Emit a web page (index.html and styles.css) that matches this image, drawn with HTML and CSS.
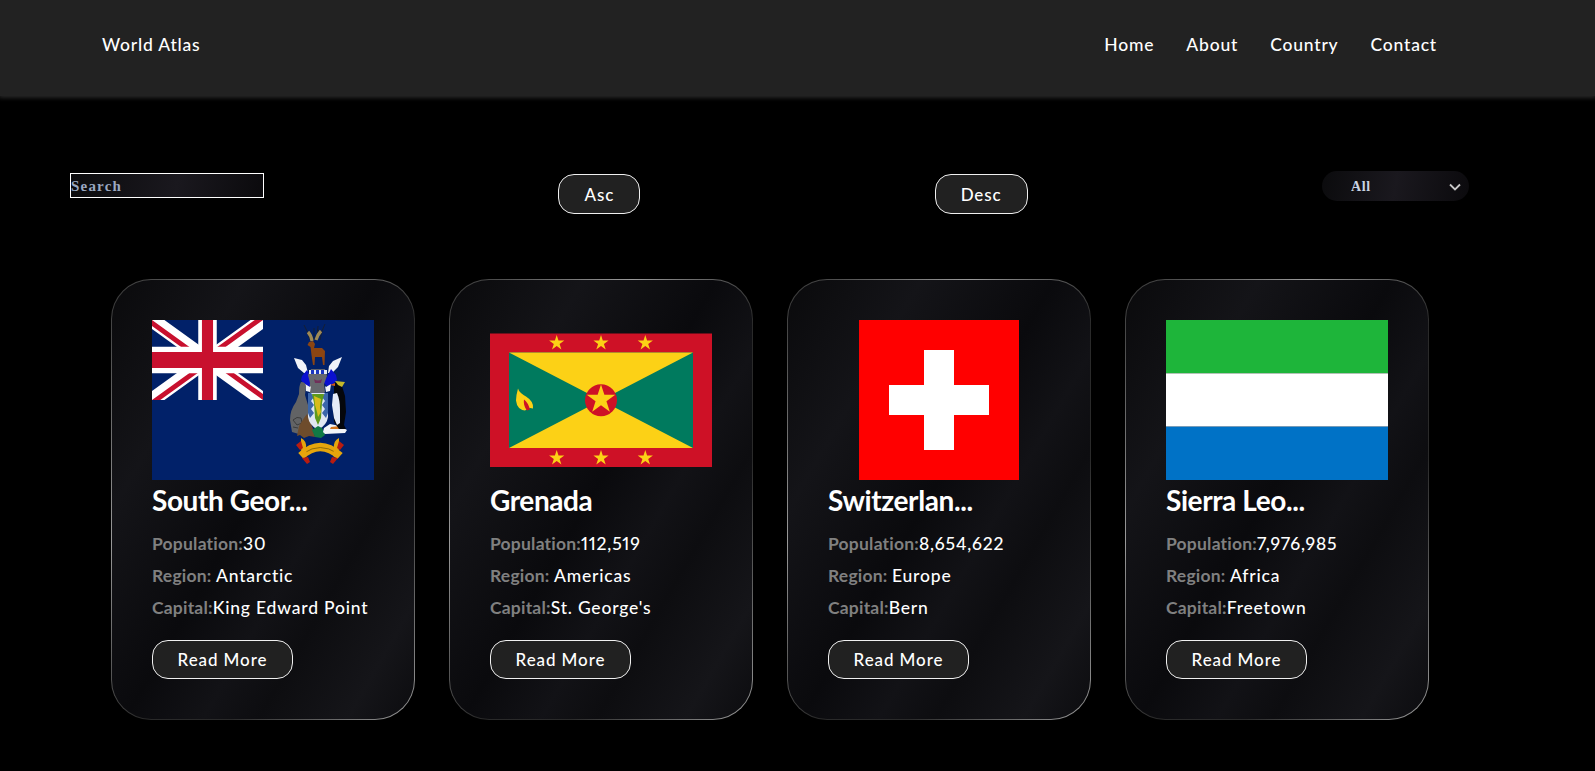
FILE: index.html
```html
<!DOCTYPE html>
<html lang="en">
<head>
<meta charset="utf-8">
<title>World Atlas</title>
<link rel="stylesheet" href="styles.css">
</head>
<body>
<header class="topbar">
  <a class="logo" href="#">World Atlas</a>
  <nav class="nav">
    <a href="#">Home</a>
    <a href="#">About</a>
    <a href="#">Country</a>
    <a href="#">Contact</a>
  </nav>
</header>
<main>
  <section class="toolbar">
    <input class="search" type="text" placeholder="Search">
    <button class="pill">Asc</button>
    <button class="pill">Desc</button>
    <div class="select-wrap">
      <select class="select"><option>All</option></select>
      <svg class="chevron" viewBox="0 0 12 8"><path d="M1 1.5 6 6.5 11 1.5" fill="none" stroke="#c8c8c8" stroke-width="1.8"/></svg>
    </div>
  </section>
  <section class="cards">
    <article class="card">
      <svg class="flag" viewBox="0 0 222 160">
        <rect width="222" height="160" fill="#012169"/>
        <svg x="0" y="0" width="111" height="80" viewBox="0 0 60 30" preserveAspectRatio="none">
          <clipPath id="uj"><path d="M30 15h30v15zv15H0zH0V0zV0h30z"/></clipPath>
          <path d="M0 0 60 30M60 0 0 30" stroke="#fff" stroke-width="6"/>
          <path d="M0 0 60 30M60 0 0 30" stroke="#C8102E" stroke-width="4" clip-path="url(#uj)"/>
          <path d="M30 0V30M0 15H60" stroke="#fff" stroke-width="10"/>
          <path d="M30 0V30M0 15H60" stroke="#C8102E" stroke-width="6"/>
        </svg>
        <!-- coat of arms: antlers and stag -->
        <path d="M158 20 155 11 152 5M158 14 155 13M168 20 170 11 173 4M170 12 165 10M162 20V8M165 20 166 6" stroke="#1c1c1c" stroke-width=".7" fill="none"/>
        <path d="M156 12q3 3 4 9M169 11q-3 3-5 9" stroke="#a08a55" stroke-width="3.200" fill="none"/>
        <path d="M157 22l4-1 2 3-1 4 8 0 3 3-.5 14h-1.500l-1-8h-7l-.5 8h-1.500l-1.500-10-1-8-3-2z" fill="#8c4512"/>
        <!-- wings and mantling -->
        <path d="M142 38l8 2 4 5 2 8-4 0-6-5zM190 37l-9 4-4 5-1 7 4 0 6-6z" fill="#f2f4f8"/>
        <path d="M150 56l5-6 4 7 3 5-4 5-6-2-3-5zM184 55l-5-6-4 8-4 5 5 5 5-3 4-4z" fill="#0a10d0"/>
        <!-- helmet -->
        <path d="M159 49h14l2 7-3 8 1 8-3 3h-11l-2-4 1-8-2-8z" fill="#66686e"/>
        <path d="M157 50h18v4h-18z" fill="#e8edf5"/>
        <path d="M159 50h3v4h-3zM164 50h3v4h-3zM169 50h3v4h-3z" fill="#1a35c0"/>
        <path d="M162 59q4 3 8 0l-1 4h-6z" fill="#70305a"/>
        <path d="M153 64l5 3 1-1-1 6-4-1zM179 64l-5 3-1-1 1 6 4-1z" fill="#f2f4f8"/>
        <!-- seal -->
        <path d="M149 62q5 0 5 5l-1 8 3 10 1 12-7 18-10-3-2-12q0-10 6-18l3-8q0-9 2-12z" fill="#626365"/>
        <path d="M141 100q4-4 8-2l1 5-5 2zM146 108l-5-1" stroke="#3c3c3c" stroke-width="1" fill="none"/>
        <path d="M145 116l2-10 5-8 3-4 3 6 3 9 2 8-6-1-5 2-4-3z" fill="#6e4c2c"/>
        <!-- shield -->
        <path d="M156 73h20v24q-1 8-10 13-9-5-10-13z" fill="#e0e7f2"/>
        <path d="M156 73h3l3 4-3 4 3 4-3 4 3 4-4 5-2-5zM176 73h-3l-3 4 3 4-3 4 3 4-3 4 4 5 2-5z" fill="#3b66aa"/>
        <path d="M160 74h12l-2 9-1 15-3 7-3-7-1-15z" fill="#5f9a1c"/>
        <path d="M162 76l7 3-1 8 1 5-3 5-1-5-2-7z" fill="#d8bc1c"/>
        <path d="M160 110l6-4 4 2 3 7-4 3-6-1z" fill="#117a45"/>
        <!-- penguin on ice -->
        <path d="M172 108l6-4 10 2 7 4-2 3-20 1-2-2z" fill="#f2f4f8"/>
        <path d="M178 109h11l3-1-4-2-9 1z" fill="#d4761e"/>
        <path d="M182 63q6-2 8 3l3 10 1 16-2 13 2 4-7 0-5-7-1-20 1-10z" fill="#05070c"/>
        <path d="M181 74l4-1q3 7 3 17l0 13-3 2-3-7-2-13z" fill="#e6ecf8"/>
        <path d="M178 65l5-2 0 3z" fill="#d45a14"/>
        <path d="M183 61l10 1-3 5-4-2z" fill="#c4b82a"/>
        <!-- motto scroll -->
        <path d="M149 136Q168 118 188 136" stroke="#e6a50c" stroke-width="8" fill="none"/>
        <path d="M152 133Q168 122 185 133" stroke="#7a5c08" stroke-width=".8" fill="none"/>
        <path d="M149 118q6 3 5 10l1 8-4 2q-2-6-2-11zM187 118q-6 3-5 10l-1 8 4 2q2-6 2-11z" fill="#e6a50c"/>
        <path d="M144 125l5-4 2 7-3 2zM192 125l-5-4-2 7 3 2zM150 138l6-1 2 5-3 2zM186 138l-6-1-2 5 3 2z" fill="#b81c10"/>
      </svg>
      <h2 class="title">South Geor...</h2>
      <p class="stat"><span class="label">Population:</span>30</p>
      <p class="stat"><span class="label">Region: </span>Antarctic</p>
      <p class="stat"><span class="label">Capital:</span>King Edward Point</p>
      <button class="pill read">Read More</button>
    </article>
    <article class="card">
      <svg class="flag" viewBox="0 0 222 133">
        <defs><path id="star" d="M0-1 .225-.309.951-.309.363.118.588.809 0 .382-.588.809-.363.118-.951-.309-.225-.309z"/></defs>
        <rect width="222" height="133.500" fill="#CE1126"/>
        <rect x="19" y="19" width="184" height="95.500" fill="#007A5E"/>
        <path d="M19 19H203L111 66.700 203 114.500H19L111 66.700z" fill="#FCD116"/>
        <circle cx="111" cy="66.700" r="16" fill="#CE1126"/>
        <g fill="#FCD116">
          <use href="#star" transform="translate(111 66) scale(15)"/>
          <use href="#star" transform="translate(66.700 9.500) scale(8)"/>
          <use href="#star" transform="translate(111 9.500) scale(8)"/>
          <use href="#star" transform="translate(155.300 9.500) scale(8)"/>
          <use href="#star" transform="translate(66.700 124.500) scale(8)"/>
          <use href="#star" transform="translate(111 124.500) scale(8)"/>
          <use href="#star" transform="translate(155.300 124.500) scale(8)"/>
          <path d="M28 55q1 4 8 8 8 5 7 12-3-1-5 0l-3 2q-8-1-9-10 0-5 2-12z"/>
        </g>
        <path d="M34 66q4 3 6 10l-3 1q-4-5-3-11z" fill="#CE1126"/>
      </svg>
      <h2 class="title">Grenada</h2>
      <p class="stat"><span class="label">Population:</span>112,519</p>
      <p class="stat"><span class="label">Region: </span>Americas</p>
      <p class="stat"><span class="label">Capital:</span>St. George's</p>
      <button class="pill read">Read More</button>
    </article>
    <article class="card">
      <svg class="flag" viewBox="0 0 160 160">
        <rect width="160" height="160" fill="#f00"/>
        <path d="M65 30h30v35h35v30H95v35H65V95H30V65h35z" fill="#fff"/>
      </svg>
      <h2 class="title">Switzerlan...</h2>
      <p class="stat"><span class="label">Population:</span>8,654,622</p>
      <p class="stat"><span class="label">Region: </span>Europe</p>
      <p class="stat"><span class="label">Capital:</span>Bern</p>
      <button class="pill read">Read More</button>
    </article>
    <article class="card">
      <svg class="flag" viewBox="0 0 222 160">
        <rect width="222" height="53.330" fill="#1EB53A"/>
        <rect y="53.330" width="222" height="53.340" fill="#fff"/>
        <rect y="106.670" width="222" height="53.330" fill="#0072C6"/>
      </svg>
      <h2 class="title">Sierra Leo...</h2>
      <p class="stat"><span class="label">Population:</span>7,976,985</p>
      <p class="stat"><span class="label">Region: </span>Africa</p>
      <p class="stat"><span class="label">Capital:</span>Freetown</p>
      <button class="pill read">Read More</button>
    </article>
  </section>
</main>
</body>
</html>
```
FILE: styles.css
```css
* { box-sizing: border-box; }
body {
  margin: 0;
  background: #000;
  color: #fff;
  font-family: "Lato", "Liberation Sans", sans-serif;
}
a { color: inherit; text-decoration: none; }

.topbar {
  height: 96px;
  padding: 0 158px 8px 102px;
  background: #222;
  box-shadow: 0 1px 4px 1px #262626;
  display: flex;
  align-items: center;
  justify-content: space-between;
  font-size: 17.500px;
  letter-spacing: 0.8px;
  font-weight: 500;
}
.nav { display: flex; gap: 32px; }

.toolbar {
  margin-top: 75px;
  padding: 0 126px 0 70px;
  height: 43px;
  display: flex;
  justify-content: space-between;
  align-items: flex-start;
}
.search {
  width: 194px;
  height: 25px;
  margin-top: 2px;
  padding: 1px 0 0;
  border: 1px solid #fff;
  border-radius: 0;
  outline: none;
  color: #fff;
  background: linear-gradient(100deg, #0b0b0d, #1a181e 55%, #0b0a0d);
  font: bold 15px "Liberation Serif", serif;
  letter-spacing: 1.200px;
}
.search::placeholder { color: #9aa8c0; opacity: 1; }

.pill {
  height: 40px;
  margin-top: 3px;
  padding: 0 25px;
  border: 1px solid #f0f0f0;
  border-radius: 16px;
  background: #212121;
  color: #fff;
  font-family: inherit;
  font-size: 17px;
  font-weight: 500;
  letter-spacing: 0.9px;
}
.select-wrap { position: relative; width: 147px; height: 30px; }
.select {
  appearance: none;
  width: 100%;
  height: 100%;
  padding: 0 0 0 29px;
  border: 0;
  border-radius: 15px;
  background: linear-gradient(100deg, #0b0b0d, #1a181e 50%, #0b0a0d);
  color: #c9d3e2;
  font: bold 14px "Liberation Serif", serif;
  letter-spacing: 0.6px;
  outline: none;
}
.chevron {
  position: absolute;
  right: 8px;
  top: 12px;
  width: 12px;
  height: 8px;
  pointer-events: none;
}

.cards {
  margin-top: 65px;
  padding-left: 111px;
  display: flex;
  gap: 34px;
}
.card {
  width: 304px;
  height: 441px;
  padding: 40px;
  border: 1px solid transparent;
  border-radius: 40px;
  background:
    linear-gradient(120deg, #0a0a0c 0%, #141418 24%, #0a0a0d 48%, #121216 62%, #0d0d10 72%, #151519 88%, #0c0c0f 100%) padding-box,
    linear-gradient(125deg, #333 0%, #9a9a9a 30%, #2a2a2a 55%, #2a2a2a 70%, #9a9a9a 100%) border-box;
}
.flag { display: block; width: 222px; height: 160px; }
.title {
  margin: 0 0 8px;
  font-size: 28px;
  line-height: 40px;
  font-weight: 700;
  letter-spacing: -0.4px;
  white-space: nowrap;
}
.stat {
  margin: 0;
  height: 32px;
  line-height: 32px;
  font-size: 17.500px;
  font-weight: 500;
  font-variant-numeric: proportional-nums;
  letter-spacing: 0.8px;
  white-space: nowrap;
}
.label { color: #808080; font-weight: 700; letter-spacing: 0.2px; }
.read { width: 141px; padding: 0; margin-top: 16px; display: block; height: 39px; }
```
